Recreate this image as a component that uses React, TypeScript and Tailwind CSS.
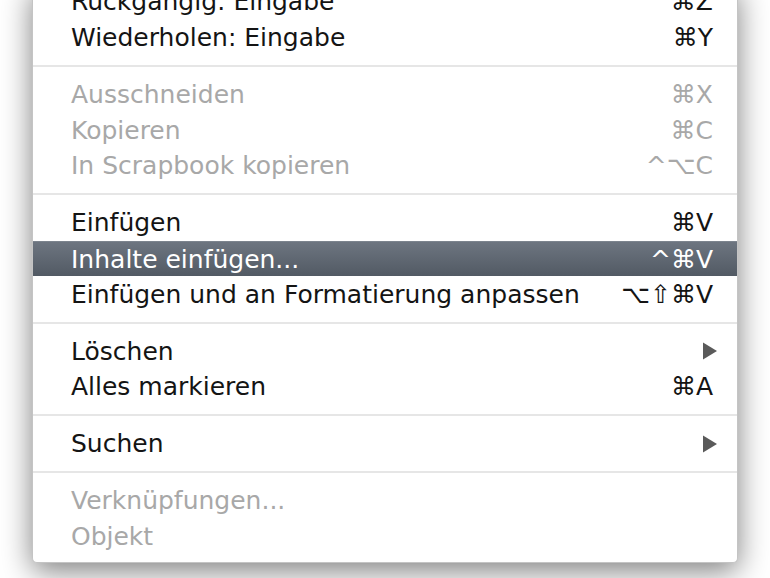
type Item =
  | { kind: 'sep' }
  | {
      kind: 'item';
      label: string;
      shortcut?: string;
      disabled?: boolean;
      active?: boolean;
      submenu?: boolean;
    };

const items: Item[] = [
  { kind: 'item', label: 'Rückgängig: Eingabe', shortcut: '⌘Z' },
  { kind: 'item', label: 'Wiederholen: Eingabe', shortcut: '⌘Y' },
  { kind: 'sep' },
  { kind: 'item', label: 'Ausschneiden', shortcut: '⌘X', disabled: true },
  { kind: 'item', label: 'Kopieren', shortcut: '⌘C', disabled: true },
  { kind: 'item', label: 'In Scrapbook kopieren', shortcut: '^⌥C', disabled: true },
  { kind: 'sep' },
  { kind: 'item', label: 'Einfügen', shortcut: '⌘V' },
  { kind: 'item', label: 'Inhalte einfügen...', shortcut: '^⌘V', active: true },
  { kind: 'item', label: 'Einfügen und an Formatierung anpassen', shortcut: '⌥⇧⌘V' },
  { kind: 'sep' },
  { kind: 'item', label: 'Löschen', submenu: true },
  { kind: 'item', label: 'Alles markieren', shortcut: '⌘A' },
  { kind: 'sep' },
  { kind: 'item', label: 'Suchen', submenu: true },
  { kind: 'sep' },
  { kind: 'item', label: 'Verknüpfungen...', disabled: true },
  { kind: 'item', label: 'Objekt', disabled: true },
];

function Arrow() {
  return (
    <svg width="14" height="18" viewBox="0 0 14 18" className="mr-[-4px]">
      <path d="M0 0.5 L14 9 L0 17.5 Z" fill="#5a5a5a" />
    </svg>
  );
}

export default function App() {
  return (
    <div className="h-[578px] w-[770px] overflow-hidden bg-white">
      <div
        className="ml-[32px] mt-[-16px] w-[706px] rounded-b-[5px] border border-t-0 border-[#c4c4c4] bg-white pb-[8px] shadow-[0_8px_30px_rgba(0,0,0,0.5)]"
        style={{ fontFamily: '"DejaVu Sans", "Liberation Sans", sans-serif' }}
      >
        {items.map((it, i) =>
          it.kind === 'sep' ? (
            <div key={i} className="flex h-[21.3px] items-center">
              <div className="h-[2px] w-full bg-[#e6e6e6]" />
            </div>
          ) : (
            <div
              key={i}
              className={
                'flex h-[35.7px] items-center justify-between pl-[38px] pr-[24px] text-[25px] leading-none ' +
                (it.active
                  ? 'border-t border-[#7c848e] bg-gradient-to-b from-[#6d7580] to-[#525a64] text-white'
                  : it.disabled
                    ? 'text-[#a8a8a8]'
                    : 'text-[#141414]')
              }
            >
              <span>{it.label}</span>
              {it.submenu ? <Arrow /> : <span>{it.shortcut}</span>}
            </div>
          ),
        )}
      </div>
    </div>
  );
}
